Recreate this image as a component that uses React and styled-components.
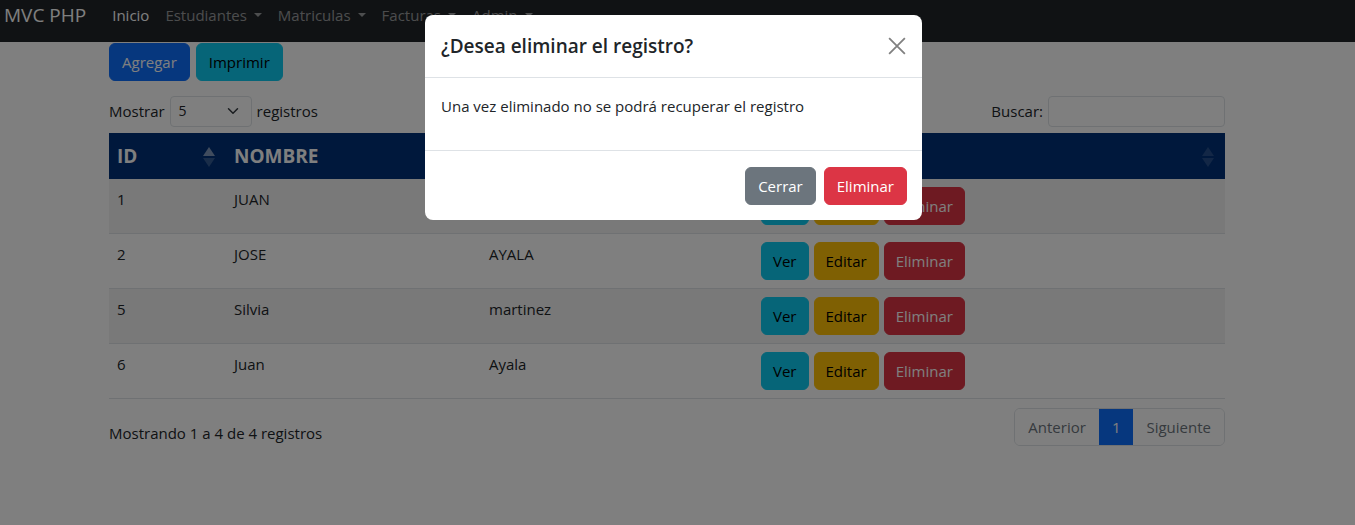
import React from "react";
import styled, { createGlobalStyle } from "styled-components";

const GlobalStyle = createGlobalStyle`
  * { box-sizing: border-box; }
  body {
    margin: 0;
    font-family: "Open Sans", "Noto Sans", sans-serif;
    font-size: 15px;
    line-height: 24px;
    color: #212529;
    background: #fff;
  }
`;

const Navbar = styled.nav`
  height: 42px;
  background: #212529;
  display: flex;
  align-items: flex-start;
  padding: 0 0 0 4px;
`;

const Brand = styled.div`
  font-size: 19px;
  line-height: 30px;
  color: #fff;
  margin-right: 18px;
`;

const NavLink = styled.div`
  display: flex;
  align-items: center;
  line-height: 30px;
  padding: 0 8px;
  color: ${(p) => (p.$active ? "#fff" : "rgba(255,255,255,0.55)")};
`;

const Caret = styled.span`
  display: inline-block;
  margin-left: 7px;
  border-top: 4px solid currentColor;
  border-left: 4px solid transparent;
  border-right: 4px solid transparent;
`;

const Container = styled.main`
  width: 1116px;
  margin-left: 109px;
`;

const Toolbar = styled.div`
  display: flex;
  gap: 6px;
  padding-top: 1px;
`;

const Button = styled.button`
  font: inherit;
  line-height: 24px;
  height: 38px;
  padding: 6px ${(p) => p.$px || 12}px;
  border: 1px solid ${(p) => p.$bg};
  border-radius: 6px;
  background: ${(p) => p.$bg};
  color: ${(p) => p.$fg || "#fff"};
  cursor: pointer;
`;

const Controls = styled.div`
  display: flex;
  justify-content: space-between;
  align-items: center;
  margin-top: 14px;
  height: 32px;
`;

const Label = styled.label`
  display: flex;
  align-items: center;
  gap: 5px;
`;

const Select = styled.div`
  width: 82px;
  height: 31px;
  border: 1px solid #dee2e6;
  border-radius: 4px;
  display: flex;
  align-items: center;
  justify-content: space-between;
  padding: 0 12px 0 8px;
  font-size: 14px;
`;

const Input = styled.div`
  width: 177px;
  height: 31px;
  border: 1px solid #dee2e6;
  border-radius: 4px;
`;

const Table = styled.table`
  width: 1116px;
  border-collapse: collapse;
  margin-top: 6px;
  table-layout: fixed;
`;

const Th = styled.th`
  position: relative;
  background: #003178;
  color: #fff;
  text-align: left;
  font-size: 19px;
  font-weight: 700;
  height: 46px;
  padding: 0 8px;
`;

const SortIcon = styled.svg`
  position: absolute;
  right: 10px;
  top: 13px;
`;

const Tr = styled.tr`
  background: ${(p) => (p.$striped ? "#f2f2f2" : "#fff")};
  border-bottom: 1px solid #dee2e6;
`;

const Td = styled.td`
  padding: 8px;
  vertical-align: top;
`;

const Actions = styled.div`
  display: flex;
  gap: 5px;
`;

const Footer = styled.div`
  display: flex;
  justify-content: space-between;
  align-items: center;
  margin-top: 9px;
`;

const Info = styled.div`
  padding-top: 12px;
`;

const Pagination = styled.div`
  display: flex;
  border: 1px solid #dee2e6;
  border-radius: 6px;
  overflow: hidden;
  height: 38px;
`;

const PageItem = styled.div`
  padding: 6px 13px;
  line-height: 24px;
  color: ${(p) => (p.$active ? "#fff" : "#6c757d")};
  background: ${(p) => (p.$active ? "#0d6efd" : "#fff")};
`;

const Backdrop = styled.div`
  position: fixed;
  inset: 0;
  background: rgba(0, 0, 0, 0.5);
`;

const Dialog = styled.div`
  width: 497px;
  margin: 15px 0 0 425px;
  background: #fff;
  border-radius: 8px;
`;

const ModalHeader = styled.div`
  display: flex;
  align-items: center;
  justify-content: space-between;
  padding: 16px 16px;
  border-bottom: 1px solid #dee2e6;
`;

const ModalTitle = styled.h5`
  margin: 0;
  font-size: 19px;
  line-height: 30px;
  font-weight: 600;
`;

const ModalBody = styled.div`
  padding: 16px;
  p {
    margin: 0 0 16px;
  }
`;

const ModalFooter = styled.div`
  display: flex;
  justify-content: flex-end;
  gap: 8px;
  padding: 16px 15px 15px;
  border-top: 1px solid #dee2e6;
`;

const Sort = ({ up = 0.15, down = 0.15 }) => (
  <SortIcon width="14" height="22" viewBox="0 0 14 22">
    <polygon points="7,1 13,10 1,10" fill="#fff" fillOpacity={up} />
    <polygon points="1,12 13,12 7,21" fill="#fff" fillOpacity={down} />
  </SortIcon>
);

const rows = [
  { id: 1, nombre: "JUAN", apellido: "AYALA" },
  { id: 2, nombre: "JOSE", apellido: "AYALA" },
  { id: 5, nombre: "Silvia", apellido: "martinez" },
  { id: 6, nombre: "Juan", apellido: "Ayala" },
];

export default function App() {
  return (
    <>
      <GlobalStyle />
      <Navbar>
        <Brand>MVC PHP</Brand>
        <NavLink $active>Inicio</NavLink>
        <NavLink>Estudiantes<Caret /></NavLink>
        <NavLink>Matriculas<Caret /></NavLink>
        <NavLink>Facturas<Caret /></NavLink>
        <NavLink>Admin<Caret /></NavLink>
      </Navbar>
      <Container>
        <Toolbar>
          <Button $bg="#0d6efd">Agregar</Button>
          <Button $bg="#0dcaf0" $fg="#000">Imprimir</Button>
        </Toolbar>
        <Controls>
          <Label>
            Mostrar
            <Select>
              5
              <svg width="12" height="12" viewBox="0 0 16 16">
                <path d="M2 5l6 6 6-6" fill="none" stroke="#343a40" strokeWidth="2" strokeLinecap="round" strokeLinejoin="round" />
              </svg>
            </Select>
            registros
          </Label>
          <Label>
            Buscar:
            <Input />
          </Label>
        </Controls>
        <Table>
          <colgroup>
            <col style={{ width: 117 }} />
            <col style={{ width: 255 }} />
            <col style={{ width: 272 }} />
            <col style={{ width: 472 }} />
          </colgroup>
          <thead>
            <tr>
              <Th>ID<Sort up={0.5} down={0.2} /></Th>
              <Th>NOMBRE<Sort /></Th>
              <Th>APELLIDO<Sort /></Th>
              <Th>ACCIONES<Sort /></Th>
            </tr>
          </thead>
          <tbody>
            {rows.map((r, i) => (
              <Tr key={r.id} $striped={i % 2 === 0}>
                <Td>{r.id}</Td>
                <Td>{r.nombre}</Td>
                <Td>{r.apellido}</Td>
                <Td>
                  <Actions>
                    <Button $bg="#0dcaf0" $fg="#000" $px={11}>Ver</Button>
                    <Button $bg="#ffc107" $fg="#000" $px={11}>Editar</Button>
                    <Button $bg="#dc3545" $px={11}>Eliminar</Button>
                  </Actions>
                </Td>
              </Tr>
            ))}
          </tbody>
        </Table>
        <Footer>
          <Info>Mostrando 1 a 4 de 4 registros</Info>
          <Pagination>
            <PageItem>Anterior</PageItem>
            <PageItem $active>1</PageItem>
            <PageItem>Siguiente</PageItem>
          </Pagination>
        </Footer>
      </Container>
      <Backdrop>
        <Dialog>
          <ModalHeader>
            <ModalTitle>¿Desea eliminar el registro?</ModalTitle>
            <svg width="18" height="18" viewBox="0 0 16 16">
              <path d="M1 1l14 14M15 1L1 15" stroke="#808080" strokeWidth="1.6" />
            </svg>
          </ModalHeader>
          <ModalBody>
            <p>Una vez eliminado no se podrá recuperar el registro</p>
          </ModalBody>
          <ModalFooter>
            <Button $bg="#6c757d">Cerrar</Button>
            <Button $bg="#dc3545">Eliminar</Button>
          </ModalFooter>
        </Dialog>
      </Backdrop>
    </>
  );
}
